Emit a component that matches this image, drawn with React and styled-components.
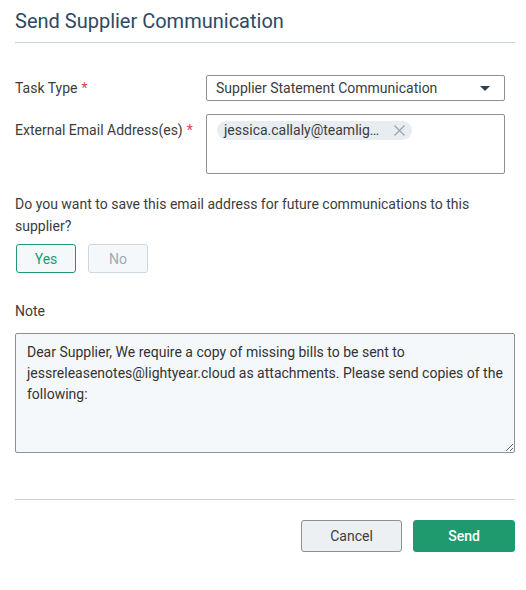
import React from "react";
import styled, { createGlobalStyle } from "styled-components";

const Global = createGlobalStyle`
  html, body { margin: 0; padding: 0; background: #fff; }
  body { font-family: Roboto, "Liberation Sans", Arial, sans-serif; font-size: 14px; color: #3c3c3c; }
  * { box-sizing: border-box; }
`;

const Page = styled.div`
  padding: 9px 11px 0 15px;
  width: 526px;
`;

const Title = styled.h1`
  margin: 0;
  font-size: 20px;
  line-height: 24px;
  font-weight: 400;
  color: #2c4a64;
`;

const Divider = styled.hr`
  margin: ${(p) => p.$mt || 0}px 0 0;
  border: 0;
  border-top: 1px solid ${(p) => p.$color || "#c9d4d9"};
  height: 0;
`;

const FormGrid = styled.div`
  margin-top: 32px;
  display: grid;
  grid-template-columns: 191px 299px;
  row-gap: 13px;
  align-items: center;
`;

const Label = styled.label`
  font-size: 14px;
  line-height: 20px;
  color: #3c3c3c;
  align-self: ${(p) => (p.$top ? "start" : "center")};
  padding-top: ${(p) => (p.$top ? 6 : 0)}px;
`;

const Req = styled.span`
  color: #e0434f;
  margin-left: 4px;
`;

const Select = styled.div`
  height: 26px;
  border: 1px solid #8c9196;
  border-radius: 2px;
  display: flex;
  align-items: center;
  justify-content: space-between;
  padding: 0 14px 0 9px;
  font-size: 14px;
  color: #3c3c3c;
  background: #fff;
`;

const EmailBox = styled.div`
  height: 60px;
  border: 1px solid #8c9196;
  border-radius: 2px;
  padding: 6px 10px;
  display: flex;
  align-items: flex-start;
`;

const Chip = styled.span`
  display: inline-flex;
  align-items: center;
  gap: 15px;
  height: 19px;
  padding: 0 7px 0 7px;
  border-radius: 10px;
  background: #e8edf1;
  font-size: 14px;
  color: #3c3c3c;
  line-height: 19px;
`;

const Question = styled.p`
  margin: 19px 0 0;
  font-size: 14px;
  line-height: 22px;
  color: #3c3c3c;
`;

const ToggleRow = styled.div`
  margin-top: 7px;
  display: flex;
  gap: 12px;
  padding-left: 1px;
`;

const Toggle = styled.button`
  width: 60px;
  height: 29px;
  border-radius: 3px;
  background: #f5f8fb;
  border: 1px solid ${(p) => (p.$active ? "#1f9a6e" : "#cfd7dd")};
  color: ${(p) => (p.$active ? "#1f9a6e" : "#a3a9ae")};
  font-family: inherit;
  font-size: 14px;
  padding: 0;
`;

const NoteLabel = styled.div`
  margin-top: 28px;
  font-size: 14px;
  line-height: 20px;
  color: #3c3c3c;
`;

const TextArea = styled.textarea`
  display: block;
  margin-top: 12px;
  width: 500px;
  height: 120px;
  border: 1px solid #8c9196;
  border-radius: 2px;
  background: #f5f8fb;
  padding: 8px 11px;
  font-family: inherit;
  font-size: 14px;
  line-height: 21px;
  color: #333;
  resize: vertical;
`;

const Footer = styled.div`
  margin-top: 20px;
  display: flex;
  justify-content: flex-end;
  gap: 11px;
  width: 500px;
`;

const Button = styled.button`
  width: ${(p) => (p.$primary ? 102 : 101)}px;
  height: 32px;
  border-radius: 3px;
  font-family: inherit;
  font-size: 14px;
  font-weight: ${(p) => (p.$primary ? 500 : 400)};
  background: ${(p) => (p.$primary ? "#1f9a6e" : "#edf0f3")};
  color: ${(p) => (p.$primary ? "#fff" : "#3c3c3c")};
  border: 1px solid ${(p) => (p.$primary ? "#1f9a6e" : "#8c9196")};
  padding: 0;
`;

const Caret = () => (
  <svg width="10" height="5" viewBox="0 0 10 5">
    <path d="M0 0 L10 0 L5 5 Z" fill="#2c3f55" />
  </svg>
);

const CloseX = () => (
  <svg width="11" height="11" viewBox="0 0 11 11">
    <path d="M0.5 0.5 L10.5 10.5 M10.5 0.5 L0.5 10.5" stroke="#9aa3ab" strokeWidth="1.2" fill="none" />
  </svg>
);

export default function App() {
  return (
    <>
      <Global />
      <Page>
        <Title>Send Supplier Communication</Title>
        <Divider $mt={9} />
        <FormGrid>
          <Label>
            Task Type<Req>*</Req>
          </Label>
          <Select>
            <span>Supplier Statement Communication</span>
            <Caret />
          </Select>
          <Label $top>
            External Email Address(es)<Req>*</Req>
          </Label>
          <EmailBox>
            <Chip>
              jessica.callaly@teamlig…
              <CloseX />
            </Chip>
          </EmailBox>
        </FormGrid>
        <Question>
          Do you want to save this email address for future communications to this supplier?
        </Question>
        <ToggleRow>
          <Toggle $active>Yes</Toggle>
          <Toggle>No</Toggle>
        </ToggleRow>
        <NoteLabel>Note</NoteLabel>
        <TextArea
          readOnly
          defaultValue="Dear Supplier, We require a copy of missing bills to be sent to jessreleasenotes@lightyear.cloud as attachments. Please send copies of the following:"
        />
        <Divider $mt={46} $color="#c9d0d4" />
        <Footer>
          <Button>Cancel</Button>
          <Button $primary>Send</Button>
        </Footer>
      </Page>
    </>
  );
}
